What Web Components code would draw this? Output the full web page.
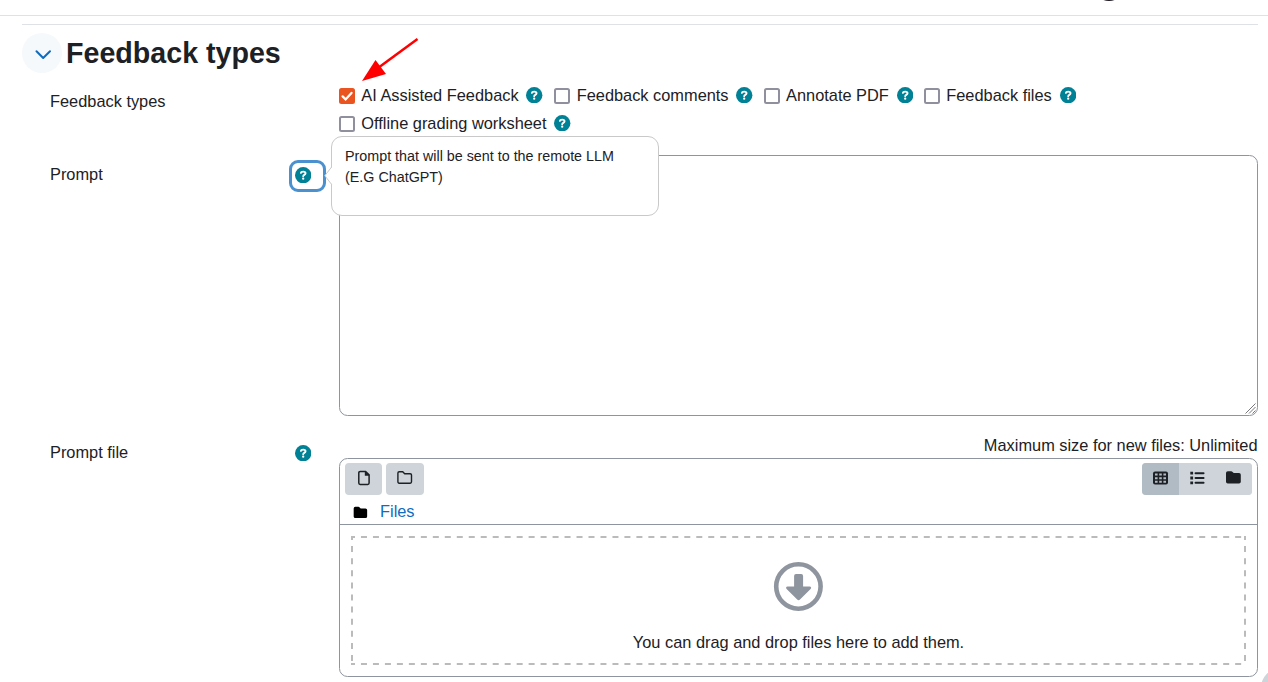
<!DOCTYPE html>
<html lang="en">
<head>
<meta charset="utf-8">
<title>Feedback types</title>
<style>
html,body{margin:0;height:682px;overflow:hidden;background:#fff}
body{font:16.36px/24.75px "Liberation Sans",Arial,sans-serif;color:#1d2125}
</style>
</head>
<body>
<settings-page></settings-page>
<script>
const define = (name, html) => {
  const t = document.createElement('template');
  t.innerHTML = html;
  customElements.define(name, class extends HTMLElement {
    constructor() {
      super();
      this.attachShadow({mode: 'open'}).appendChild(t.content.cloneNode(true));
    }
  });
};

define('help-icon', `<style>:host{display:block;width:16.4px;height:17px;flex:none}svg{display:block}</style>
<svg width="16.4" height="16.4" viewBox="0 0 512 512"><circle cx="256" cy="256" r="256" fill="#008196"/><path fill="none" stroke="#fff" stroke-width="58" stroke-linecap="round" stroke-linejoin="round" d="M186 186C190 150 220 143 256 143C305 143 330 165 330 197C330 245 256 245 256 288"/><circle cx="256" cy="364" r="36" fill="#fff"/></svg>`);

define('check-option', `<style>
:host{display:flex;align-items:center;height:28px;white-space:nowrap}
.box{box-sizing:border-box;width:16px;height:16px;border:2px solid #8f8f9d;border-radius:2.5px;margin:1px 6.3px 0 0;background:#fff}
svg{display:none}
:host([checked]) .box{border-color:#e95420;background:#e95420}
:host([checked]) svg{display:block;margin:-2px}
:host([checked]){margin-right:.6px}
help-icon{margin:0 0 0 7.8px}
</style><span class="box"><svg width="16" height="16" viewBox="0 0 16 16"><path d="M3.6 8.4L6.6 11.4L12.5 4.9" fill="none" stroke="#fff" stroke-width="2.3" stroke-linecap="round"/></svg></span><slot></slot><help-icon></help-icon>`);

define('section-heading', `<style>
:host{display:flex;align-items:center;height:40px;gap:4px}
i{display:grid;place-items:center;width:40px;height:40px;border-radius:50%;background:#f5f9fc;flex:none}
h3{margin:0;padding-left:0;font-size:28.63px;line-height:40px;font-weight:700}
svg{margin:3px 0 0 2px}
</style><i><svg width="18" height="12" viewBox="0 0 18 12"><path d="M2.5 2.2L9.2 9L16 2.2" fill="none" stroke="#0f6cbf" stroke-width="2" stroke-linecap="round" stroke-linejoin="round"/></svg></i><h3><slot></slot></h3>`);

define('form-row', `<style>
:host{display:grid;grid-template-columns:262px 919px;column-gap:27px;padding-left:28px}
.label{display:flex;justify-content:space-between;align-items:flex-start}
</style><div class="label"><slot name="label"></slot><slot name="help"></slot></div><div><slot></slot></div>`);

define('help-popover', `<style>
:host{box-sizing:border-box;position:absolute;left:39px;top:-27px;width:328px;height:80px;border:1px solid #c9c9ca;border-radius:11px;background:#fff;padding:9px 13px;font-size:14.32px;line-height:21px;z-index:2}
svg{position:absolute;left:-8px;top:30px}
p{margin:0}
</style><svg width="9" height="18" viewBox="0 0 9 18"><path d="M8 0L.8 8.7L8 17.4H9V0Z" fill="#fff"/><path d="M7.6 0L.8 8.7L7.6 17.4" fill="none" stroke="#c9c9ca"/></svg><p><slot></slot></p>`);

define('help-trigger', `<style>
:host{display:block;position:relative;box-sizing:border-box;width:37px;height:32px;border:3px solid #4b90cf;border-radius:9px;margin:0 -14px 0 0;flex:none}
help-icon{margin:4px 0 0 3px}
</style><help-icon></help-icon><slot></slot>`);

define('prompt-area', `<style>
:host{display:block;height:261px}
div{box-sizing:border-box;display:flex;justify-content:flex-end;align-items:flex-end;width:919px;height:261px;border:1px solid #8f959e;border-radius:8.5px}
svg{margin:0 1px 1px 0}
</style><div><svg width="11" height="11" viewBox="0 0 11 11"><path d="M.5 10.5L10.5 .5M4 10.5L10.5 4M7.5 10.5L10.5 7.5" stroke="#77777c" stroke-width="1"/></svg></div>`);

define('tool-icon', `<style>
:host{display:block;flex:none}svg{display:none;overflow:visible}
:host([name=file]) .file,:host([name=folder]) .folder,:host([name=grid]) .grid,:host([name=list]) .list,:host([name=solid]) .solid{display:block}
</style>
<svg class="file" width="12" height="16" viewBox="0 0 12 16"><path d="M2.2 1.4H7.6L11.1 4.9V13Q11.1 14.4 9.7 14.4H2.2Q.8 14.4 .8 13V2.8Q.8 1.4 2.2 1.4Z" fill="none" stroke="#1d2125" stroke-width="1.5"/><path d="M6.8 1V5.7H11.5Z" fill="#1d2125"/></svg>
<svg class="folder" width="16" height="16" viewBox="0 0 16 16"><path d="M2.2 1.8H5.7L7.7 3.8H13.2Q14.5 3.8 14.5 5.1V11.8Q14.5 13.2 13.2 13.2H2.2Q.9 13.2 .9 11.8V3.1Q.9 1.8 2.2 1.8Z" fill="none" stroke="#1d2125" stroke-width="1.4"/></svg>
<svg class="grid" width="15" height="14" viewBox="0 0 15 14"><rect width="15" height="13" y=".5" rx="2" fill="#1d2125"/><path d="M2 2.6h2.6v2H2zM6.2 2.6h2.6v2h-2.6zM10.4 2.6h2.6v2h-2.6zM2 6.2h2.6v2H2zM6.2 6.2h2.6v2h-2.6zM10.4 6.2h2.6v2h-2.6zM2 9.8h2.6v2H2zM6.2 9.8h2.6v2h-2.6zM10.4 9.8h2.6v2h-2.6z" fill="#b1bbc4"/></svg>
<svg class="list" width="15" height="14" viewBox="0 0 15 14"><path d="M.3 .8h2.8v2.8H.3zM.3 5.6h2.8v2.8H.3zM.3 10.4h2.8v2.8H.3z" fill="#1d2125"/><path d="M5.5 2.2H13.6M5.5 7H13.6M5.5 11.8H13.6" stroke="#1d2125" stroke-width="1.9" stroke-linecap="round"/></svg>
<svg class="solid" width="15" height="13" viewBox="0 0 15 13"><path d="M1.8 .2H5.2Q6 .2 6.6 .9L7.4 1.7Q7.8 2 8.5 2H13Q14.8 2 14.8 3.8V10.8Q14.8 12.5 13 12.5H1.8Q0 12.5 0 10.8V2Q0 .2 1.8 .2Z" fill="currentColor"/></svg>`);

define('file-manager', `<style>
:host{display:block}
.box{box-sizing:border-box;width:919px;height:219px;border:1px solid #8f959e;border-radius:8.5px}
.tools{display:flex;gap:4px;padding:4px 5px 0;height:32px}
.b{display:flex;align-items:center;justify-content:center;width:37px;height:32px;border-radius:4px;background:#ced4da;box-sizing:border-box}
.b:nth-child(2){width:38px}
.b tool-icon{margin-top:-3px}
.views{display:flex;margin-left:auto;border-radius:4px;overflow:hidden;background:#ced4da;width:110px}
.views .b{width:37px;border-radius:0}
.views .b.on{background:#b1bbc4}
.views .b:nth-child(2){width:36px}
.path{display:flex;align-items:center;box-sizing:border-box;height:30px;padding:6px 0 0 12.5px;border-bottom:1px solid #8f959e;color:#0f6cbf;gap:12.5px}
.path tool-icon{color:#000;transform:scale(.91);margin-top:-1px}
.path span{position:relative;top:-1px}
.drop{display:flex;justify-content:center;margin:11px 11px 0;width:895px;height:129px;position:relative}
.dash{position:absolute;inset:0}
.in{display:flex;flex-direction:column;align-items:center;padding-top:26px;gap:19px}
.in svg{display:block}
</style><div class="box"><div class="tools"><span class="b"><tool-icon name="file"></tool-icon></span><span class="b"><tool-icon name="folder"></tool-icon></span><div class="views"><span class="b on"><tool-icon name="grid"></tool-icon></span><span class="b"><tool-icon name="list"></tool-icon></span><span class="b"><tool-icon name="solid"></tool-icon></span></div></div>
<div class="path"><tool-icon name="solid"></tool-icon><span>Files</span></div>
<div class="drop"><svg class="dash" width="895" height="129"><path d="M0 1H895M0 128H895" stroke="#bbb" stroke-width="2" stroke-dasharray="6 5.975" stroke-dashoffset="2"/><path d="M1 0V129M894 0V129" stroke="#bbb" stroke-width="2" stroke-dasharray="6 6.1" stroke-dashoffset="2"/></svg>
<div class="in"><svg width="50" height="49" viewBox="0 0 50 49"><circle cx="25.4" cy="24.5" r="22.2" fill="none" stroke="#8f959e" stroke-width="4.6"/><path transform="translate(.9)" d="M22.1 12H27.3Q29.2 12 29.2 14V24.5H35.7Q38.2 25 36.7 27L26.1 37.5Q24.7 38.8 23.3 37.5L12.7 27Q11.2 25 13.7 24.5H20.2V14Q20.2 12 22.1 12Z" fill="#8f959e"/></svg><span>You can drag and drop files here to add them.</span></div></div></div>`);

define('pointer-arrow', `<style>:host{position:absolute;left:358px;top:34px;width:64px;height:50px}svg{display:block}</style>
<svg width="64" height="50"><path d="M59.5 5L20 34" stroke="#f00" stroke-width="2.5"/><path d="M4 47L17.5 26L28 40Z" fill="#f00"/></svg>`);

define('settings-page', `<style>
:host{display:block;position:relative;box-sizing:border-box;width:1268px;height:682px;overflow:hidden;padding-top:15px}
.bar{border-top:1px solid #dee2e6;height:8px}
section{margin:0 10px 0 22px;border-top:1px solid #dee2e6;padding-top:8px}
.types{height:82px}
.opts{display:flex;flex-wrap:wrap;column-gap:11px;padding-top:8px}
.types [slot=label]{margin-top:16px}
.prompt{height:282px}
.prompt [slot=label]{margin-top:7px}
.prompt help-trigger{margin-top:5px}
.files [slot=label]{margin-top:3px}
.files help-icon{margin:8px .8px 0 0}
.max{text-align:right;height:21px;line-height:16px;padding-right:.5px}
.dot{position:absolute;left:1094px;top:-29px;width:30px;height:30px;border-radius:50%;background:#1d1820}
.fab{position:absolute;left:1261px;top:668px;width:40px;height:40px;border-radius:50%;background:#ced4da}
</style><div class="bar"></div><section>
<section-heading>Feedback types</section-heading>
<form-row class="types"><span slot="label">Feedback types</span><div class="opts"><check-option checked>AI Assisted Feedback</check-option><check-option>Feedback comments</check-option><check-option>Annotate PDF</check-option><check-option>Feedback files</check-option><check-option>Offline grading worksheet</check-option></div></form-row>
<form-row class="prompt"><span slot="label">Prompt</span><help-trigger slot="help"><help-popover>Prompt that will be sent to the remote LLM<br>(E.G ChatGPT)</help-popover></help-trigger><prompt-area></prompt-area></form-row>
<form-row class="files"><span slot="label">Prompt file</span><help-icon slot="help"></help-icon><div><div class="max">Maximum size for new files: Unlimited</div><file-manager></file-manager></div></form-row>
</section><pointer-arrow></pointer-arrow><div class="dot"></div><div class="fab"></div>`);
</script>
</body>
</html>
